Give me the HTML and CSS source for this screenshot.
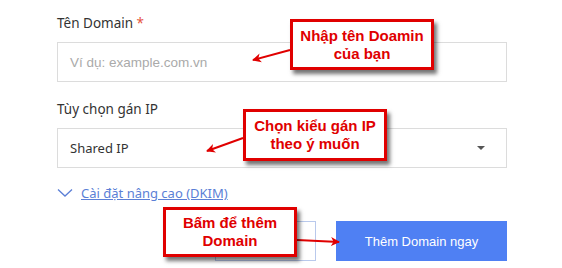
FILE: index.html
```html
<!DOCTYPE html>
<html>
<head>
    <meta charset="UTF-8">
    <title>Thêm Domain</title>
    <link rel="stylesheet" href="styles.css">
</head>
<body>

    <div class="page">
        <form class="domain-form">
            <label class="field-label">Tên Domain <span class="req">*</span></label>
            <div class="input-box placeholder">Ví dụ: example.com.vn</div>

            <label class="field-label second">Tùy chọn gán IP</label>
            <div class="input-box select">
                <span>Shared IP</span>
                <span class="caret"></span>
            </div>

            <div class="advanced">
                <svg class="chevron" width="16" height="10" viewBox="0 0 16 10">
                    <path d="M1 1.5 L8 8 L15 1.5" fill="none" stroke="#5b7fd6" stroke-width="1.3"/>
                </svg>
                <a href="#dkim">Cài đặt nâng cao (DKIM)</a>
            </div>

            <div class="actions">
                <button type="button" class="btn-outline"></button>
                <button type="button" class="btn-primary">Thêm Domain ngay</button>
            </div>
        </form>

        <!-- chú thích -->
        <svg class="arrows" width="562" height="268">
            <defs>
                <marker id="head" markerWidth="10" markerHeight="10" refX="8" refY="5" orient="auto" markerUnits="userSpaceOnUse">
                    <path d="M0 0.5 L9 5 L0 9.5 L2.5 5 Z" fill="#e00000"/>
                </marker>
            </defs>
            <line x1="290" y1="50" x2="253" y2="60" stroke="#e00000" stroke-width="2" marker-end="url(#head)"/>
            <line x1="243" y1="138" x2="207" y2="151" stroke="#e00000" stroke-width="2" marker-end="url(#head)"/>
            <line x1="297" y1="240" x2="339" y2="242" stroke="#e00000" stroke-width="2" marker-end="url(#head)"/>
        </svg>
        <div class="callout c1">Nhập tên Doamin<br>của bạn</div>
        <div class="callout c2">Chọn kiểu gán IP<br>theo ý muốn</div>
        <div class="callout c3">Bấm để thêm<br>Domain</div>
    </div>

</body>
</html>
```

FILE: styles.css
```css
body {
    margin: 0;
    background: #fff;
    font-family: "Noto Sans", "Liberation Sans", sans-serif;
    overflow: hidden;
}

.page {
    position: relative;
    width: 562px;
    height: 268px;
}

.domain-form {
    display: flex;
    flex-direction: column;
    width: 450px;
    padding: 13px 0 0 57px;
}

.field-label {
    font-size: 13.5px;
    line-height: 20px;
    color: #333;
    margin-bottom: 9px;
}

.field-label.second {
    margin-top: 17px;
}

.req {
    color: #e5533d;
}

.input-box {
    box-sizing: border-box;
    height: 40px;
    border: 1px solid #dcdcdc;
    padding: 0 12px;
    display: flex;
    align-items: center;
    font-size: 13px;
    color: #333;
}

.placeholder {
    color: #aaa;
    font-family: "Liberation Sans", Arial, sans-serif;
    font-size: 13.5px;
}

.select {
    justify-content: space-between;
}

.caret {
    width: 0;
    height: 0;
    border-left: 4px solid transparent;
    border-right: 4px solid transparent;
    border-top: 4px solid #555;
    margin-right: 9px;
}

.advanced {
    display: flex;
    align-items: center;
    gap: 8px;
    margin-top: 15px;
    height: 20px;
}

.advanced a {
    font-size: 13px;
    color: #5b7fd6;
    text-decoration: underline;
}

.actions {
    display: flex;
    justify-content: flex-end;
    gap: 20px;
    margin-top: 18px;
}

.actions button {
    height: 40px;
    border-radius: 0;
}

.btn-outline {
    width: 101px;
    background: #fff;
    border: 1px solid #b9c9ec;
}

.btn-primary {
    width: 171px;
    border: none;
    background: #4f80f3;
    color: #fff;
    font-family: "Liberation Sans", Arial, sans-serif;
    font-size: 13px;
}

.arrows {
    position: absolute;
    top: 0;
    left: 0;
}

.callout {
    position: absolute;
    box-sizing: border-box;
    background: #fff;
    border: 3px solid #e00000;
    box-shadow: 3px 4px 4px rgba(0, 0, 0, 0.55);
    color: #e00000;
    font-family: "Liberation Sans", Arial, sans-serif;
    font-weight: bold;
    font-size: 15px;
    line-height: 18px;
    text-align: center;
    display: flex;
    align-items: center;
    justify-content: center;
}

.c1 {
    left: 290px;
    top: 19px;
    width: 144px;
    height: 51px;
}

.c2 {
    left: 243px;
    top: 109px;
    width: 144px;
    height: 52px;
}

.c3 {
    left: 163px;
    top: 207px;
    width: 134px;
    height: 50px;
}
```
